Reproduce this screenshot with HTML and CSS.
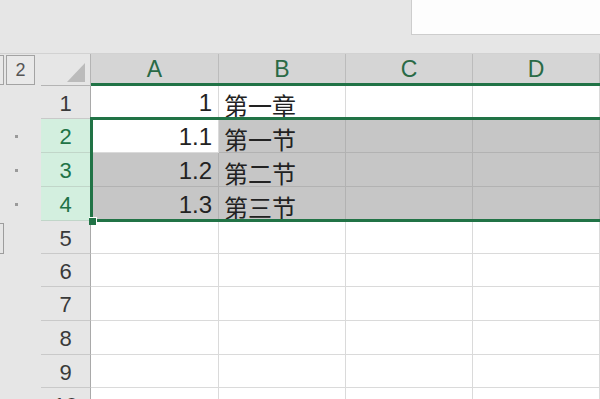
FILE: index.html
```html
<!DOCTYPE html>
<html>
<head>
<meta charset="utf-8">
<link rel="stylesheet" href="styles.css">
</head>
<body>
<div class="top">
  <div class="namebox"></div>
</div>
<div class="main">
  <div class="outline">
    <div class="levels">
      <div class="lvl lvl1"></div>
      <div class="lvl">2</div>
    </div>
    <div class="ol-rows">
      <div class="ol-row"></div>
      <div class="ol-row"><span class="dot"></span></div>
      <div class="ol-row"><span class="dot"></span></div>
      <div class="ol-row"><span class="dot"></span></div>
      <div class="ol-row"><span class="collapse"></span></div>
    </div>
  </div>
  <div class="sheet">
    <div class="corner"><span class="tri"></span></div>
    <div class="ch">A</div><div class="ch">B</div><div class="ch">C</div><div class="ch">D</div><div class="ch"></div>

    <div class="rh">1</div>
    <div class="c num">1</div><div class="c txt">第一章</div><div class="c"></div><div class="c"></div><div class="c"></div>

    <div class="rh sel">2</div>
    <div class="c num">1.1</div><div class="c txt s">第一节</div><div class="c s"></div><div class="c s"></div><div class="c s"></div>

    <div class="rh sel">3</div>
    <div class="c num s">1.2</div><div class="c txt s">第二节</div><div class="c s"></div><div class="c s"></div><div class="c s"></div>

    <div class="rh sel">4</div>
    <div class="c num s">1.3</div><div class="c txt s">第三节</div><div class="c s"></div><div class="c s"></div><div class="c s"></div>

    <div class="rh">5</div><div class="c"></div><div class="c"></div><div class="c"></div><div class="c"></div><div class="c"></div>
    <div class="rh">6</div><div class="c"></div><div class="c"></div><div class="c"></div><div class="c"></div><div class="c"></div>
    <div class="rh">7</div><div class="c"></div><div class="c"></div><div class="c"></div><div class="c"></div><div class="c"></div>
    <div class="rh">8</div><div class="c"></div><div class="c"></div><div class="c"></div><div class="c"></div><div class="c"></div>
    <div class="rh">9</div><div class="c"></div><div class="c"></div><div class="c"></div><div class="c"></div><div class="c"></div>
    <div class="rh">10</div><div class="c"></div><div class="c"></div><div class="c"></div><div class="c"></div><div class="c"></div>

    <div class="hdr-line"></div>
    <div class="selection"><span class="handle"></span></div>
  </div>
</div>
</body>
</html>
```
FILE: styles.css
```css
html, body {
  margin: 0;
  padding: 0;
}
body {
  width: 600px;
  height: 399px;
  overflow: hidden;
  background: #e6e6e6;
  font-family: "Liberation Sans", "Noto Sans CJK SC", sans-serif;
}
.top {
  height: 53px;
  border-bottom: 1px solid #d2d2d2;
  display: flex;
  justify-content: flex-end;
}
.namebox {
  width: 188px;
  height: 34px;
  background: #fdfdfd;
  border-left: 1px solid #cdcdcd;
  border-bottom: 1px solid #cdcdcd;
}
.main {
  display: flex;
}
.outline {
  width: 41px;
  flex: none;
}
.levels {
  display: flex;
  gap: 2px;
  margin-left: -25px;
  padding-top: 1px;
  height: 31px;
}
.lvl {
  width: 29px;
  height: 30px;
  border: 1px solid #a3a3a3;
  box-sizing: border-box;
  display: flex;
  align-items: center;
  justify-content: center;
  font-size: 18px;
  color: #555;
  background: #e9e9e9;
}
.ol-rows {
  display: grid;
  grid-template-rows: 33px 34px 34px 34px 33px;
}
.ol-row {
  position: relative;
  display: flex;
  align-items: center;
}
.dot {
  width: 3px;
  height: 3px;
  background: #9a9a9a;
  margin-left: 15px;
}
.collapse {
  width: 30px;
  height: 31px;
  margin-left: -26px;
  margin-top: 1px;
  border: 1px solid #9d9d9d;
  box-sizing: border-box;
}
.sheet {
  position: relative;
  display: grid;
  grid-template-columns: 50px 128px 127px 127px 127px 127px;
  grid-template-rows: 32px 33px 34px 34px 34px 33px 33px 34px 34px 33px 34px;
  flex: none;
}
.corner {
  background: #e6e6e6;
  border-right: 1px solid #b4b4b4;
  border-bottom: 1px solid #b4b4b4;
  position: relative;
}
.tri {
  position: absolute;
  right: 5px;
  bottom: 3px;
  width: 0;
  height: 0;
  border-left: 18px solid transparent;
  border-bottom: 19px solid #bbbbbb;
}
.ch {
  background: #d5d5d5;
  border-right: 1px solid #bcbcbc;
  border-bottom: 1px solid #b4b4b4;
  display: flex;
  align-items: center;
  justify-content: center;
  font-size: 23px;
  color: #2a6a46;
}
.rh {
  background: #e6e6e6;
  border-right: 1px solid #a9a9a9;
  border-bottom: 1px solid #c9c9c9;
  display: flex;
  align-items: center;
  justify-content: center;
  padding-top: 3px;
  box-sizing: border-box;
  font-size: 22px;
  color: #3a3a3a;
}
.rh.sel {
  background: #d3efdf;
  color: #217346;
  border-bottom-color: #c1d6c9;
}
.c {
  background: #ffffff;
  border-right: 1px solid #dadada;
  border-bottom: 1px solid #dadada;
  font-size: 24px;
  line-height: 24px;
  color: #222;
  display: flex;
  align-items: flex-end;
  padding: 0 6px 3px 6px;
  box-sizing: border-box;
  white-space: nowrap;
}
.c.s {
  background: #c6c6c6;
  border-right-color: #b2b2b2;
  border-bottom-color: #b2b2b2;
}
.num {
  justify-content: flex-end;
}
.txt {
  font-family: "Noto Sans CJK SC", sans-serif;
  padding-left: 5px;
  padding-bottom: 1px;
}
.hdr-line {
  position: absolute;
  left: 50px;
  width: 510px;
  top: 29px;
  height: 3px;
  background: #217346;
}
.selection {
  position: absolute;
  left: 49px;
  top: 63px;
  width: 520px;
  height: 105px;
  border: 3px solid #217346;
  box-sizing: border-box;
}
.handle {
  position: absolute;
  left: -4px;
  bottom: -6px;
  width: 7px;
  height: 7px;
  background: #217346;
  border-top: 1px solid #fff;
  border-right: 1px solid #fff;
}
```
